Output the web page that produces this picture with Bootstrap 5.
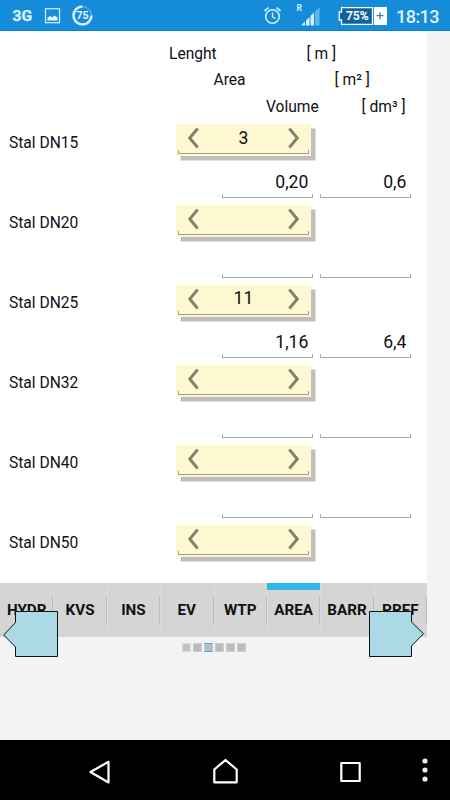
<!DOCTYPE html>
<html lang="en">
<head>
<meta charset="utf-8">
<meta name="viewport" content="width=device-width, initial-scale=1">
<title>Area</title>
<link href="https://cdn.jsdelivr.net/npm/bootstrap@5.3.0/dist/css/bootstrap.min.css" rel="stylesheet">
<style>
body{font-family:Roboto,"Liberation Sans",sans-serif;font-size:15.6px;line-height:20px;color:#111;background:#f3f3f3;width:450px;height:800px}
svg{display:block;flex:none}
.status{height:31px;background:#148cda;color:#e8f5ff;border-bottom:1px solid #0b7fd0}
.status svg text{font-family:Roboto,sans-serif}
.sheet{width:427px;height:552px;background:#fff;padding-top:12px}
.head{height:27px}
.head:first-child{padding-top:1px}
.head span{white-space:nowrap}
.sp-a{margin-left:169px;width:137.5px}
.sp-b{margin-left:213.5px;width:121px}
.sp-c{margin-left:266px;width:95.500px}
.pipe{height:80.1px}
.pipe-name{padding-left:9px;width:176px;line-height:38px}
.spin{width:135px;height:32px;background:#fdf8cf;box-shadow:4.5px 4.5px 0 #bfbfbf;padding:0 12px;position:relative}
.pipe+.pipe .spin{margin-top:.8px}
.spin .val,.out{font-size:17.6px}
.spin .val{line-height:28px}
.pipe+.pipe .val{line-height:26px}
.chev{padding-top:4px}
.line{height:4px;border:1px solid #a3a18e;border-top:0}
.spin .line{position:absolute;left:2px;right:2px;bottom:2px}
.outs{padding-left:222px;gap:7px;height:36px;padding-top:9px}
.out{width:91px;height:27px;line-height:22px;text-align:right}
.out span{padding-right:4.6px}
.out .line{margin-top:1px;border-color:#aaa}
.tabs{width:427px;height:54px;background:#d5d5d5;position:relative}
.tab-i{width:53.375px;font-weight:700;font-size:15.2px;color:#111;position:relative}
.tab-i span{white-space:nowrap}
.tab-i::after{content:"";position:absolute;right:0;top:14px;height:27px;width:1px;background:#bcbcbc}
.tab-i::before{content:"";position:absolute;right:-1px;top:0;height:54px;width:1px;background:#dcdcdc}
.tab-i:last-of-type::before{display:none}
.tab-i.on{box-shadow:inset 0 7px 0 #33b5e5}
.go{position:absolute;top:28px;z-index:2}
.go-l{left:3px}.go-r{left:369px}
.pager{width:427px;gap:2px;padding-top:6px;height:103px}
.pager i{width:9px;height:9px;background:#bcbcbc;border:1px solid #cdcdcd}
.pager i:first-child{background:#c3c3c3;border-color:#ddd}
.pager i.on{border-color:#33b5e5 #b5cfda}
.sys{height:60px;background:#000}
</style>
<script src="https://cdn.jsdelivr.net/npm/bootstrap@5.3.0/dist/js/bootstrap.bundle.min.js"></script>
</head>
<body class="d-flex flex-column overflow-hidden m-0">
<header class="status flex-shrink-0">
<svg width="450" height="30" fill="none" stroke="#d8efff">
<text x="12.500" y="20.800" font-size="14.500" font-weight="700" fill="#d8efff" stroke-width=".4" textLength="19.500" lengthAdjust="spacingAndGlyphs">3G</text>
<rect x="45.500" y="8.700" width="14" height="14" stroke-width="1.200"/>
<path d="M47.500 20.500V17.500L50.500 16L52 17.500L54.500 15.500L57.500 17.500V20.500Z" fill="#e8f6ff" stroke="none"/>
<circle cx="82.500" cy="15.500" r="9" stroke-width="1" stroke="#72bdeb"/>
<path d="M82.500 6.500A9 9 0 1 0 91.500 15.500" stroke-width="2.600"/>
<text x="82.500" y="19.300" font-size="10.500" font-weight="700" text-anchor="middle" fill="#e8f6ff" stroke="none">75</text>
<circle cx="272.500" cy="16.500" r="6.800" stroke-width="1.600"/>
<path d="M272.500 12.500V16.800L275.500 18.700" stroke-width="1.300"/><path d="M264.500 11L268.500 7.700M276.500 7.700L280.500 11" stroke-width="1.700"/>
<text x="296.500" y="10.500" font-size="8.500" font-weight="700" fill="#d8efff" stroke="none">R</text>
<path d="M301 25.500L305 21.500V25.500ZM306 25.500V20.500L309.500 17V25.500ZM310.500 25.500V16L314 12.500V25.500Z" fill="#d8efff" stroke="none"/>
<path d="M315 25.500V11.700L319.500 7.500V25.500Z" fill="#62b5e8" stroke="none"/>
<path d="M341.500 7.700H372.500V24.300H341.500V20H339.200V12H341.500Z" fill="#10629c" stroke-width="1.300" stroke="#fff"/>
<text x="346" y="20" font-size="13" font-weight="500" fill="#fff" stroke="#fff" stroke-width=".2" textLength="22.500" lengthAdjust="spacingAndGlyphs">75%</text>
<rect x="374" y="7" width="13" height="18" fill="#fff" stroke="none"/><path d="M376.500 15.700H383.500M380 12.200V19.200" stroke="#2a83bd" stroke-width="1.300"/>
<text x="396" y="22.500" font-size="18" font-weight="500" fill="#e2f3ff" stroke="none" textLength="43.500">18:13</text>
</svg>
</header>
<main class="sheet flex-shrink-0">
<div class="head d-flex"><span class="sp-a">Lenght</span><span>[ m ]</span></div>
<div class="head d-flex"><span class="sp-b">Area</span><span>[ m² ]</span></div>
<div class="head d-flex"><span class="sp-c">Volume</span><span>[ dm³ ]</span></div>
<div id="pipes"></div>
</main>
<nav class="tabs d-flex flex-shrink-0" id="tabs">
<svg class="go go-l" width="56" height="47"><path d="M12.500 .5H54.500V45.500H12.500V36L.7 24L12.500 11.500Z" fill="#add8e6" stroke="#111"/></svg>
<svg class="go go-r" width="56" height="47"><path d="M.5 .5H42.500V11L54.500 22.700L42.500 35V45.500H.5Z" fill="#add8e6" stroke="#111"/></svg>
</nav>
<div class="pager d-flex justify-content-center flex-shrink-0"><i></i><i></i><i class="on"></i><i></i><i></i><i></i></div>
<footer class="sys flex-shrink-0">
<svg width="450" height="60" fill="none" stroke="#fff" stroke-width="2.200" stroke-linejoin="round">
<path d="M90.500 32L108.500 21.800V42.500Z"/>
<path d="M214.300 42.300V29.500L225.500 20L236.700 29.500V42.300Z"/>
<rect x="341.300" y="23" width="18.400" height="18"/>
<g fill="#eee" stroke="none"><circle cx="425" cy="21" r="2.600"/><circle cx="425" cy="30" r="2.600"/><circle cx="425" cy="39" r="2.600"/></g>
</svg>
</footer>
<script>
const rows=[[15,'3','0,20','0,6'],[20,'','',''],[25,'11','1,16','6,4'],[32,'','',''],[40,'','',''],[50,'','',null]];
const chev=d=>`<div class="chev"><svg width="11" height="21" fill="none" stroke="#827f70" stroke-width="2.900"><path d="${d}"/></svg></div>`;
document.getElementById('pipes').innerHTML=rows.map(([n,v,a,b])=>`<div class="pipe"><div class="d-flex align-items-start"><div class="pipe-name">Stal DN${n}</div><div class="spin d-flex justify-content-between">${chev('M9.700 .5L1.700 10L9.700 19.500')}<div class="val">${v}</div>${chev('M1.300 .5L9.300 10L1.300 19.500')}<div class="line"></div></div></div>${b===null?'':`<div class="outs d-flex">${[a,b].map(t=>`<div class="out d-flex flex-column justify-content-end"><span>${t}</span><div class="line"></div></div>`).join('')}</div>`}</div>`).join('');
document.getElementById('tabs').insertAdjacentHTML('afterbegin',['HYDR','KVS','INS','EV','WTP','AREA','BARR','PREF'].map(t=>`<div class="tab-i d-flex align-items-center justify-content-center ${t==='AREA'?'on':''}"><span>${t}</span></div>`).join(''));
</script>
</body>
</html>
